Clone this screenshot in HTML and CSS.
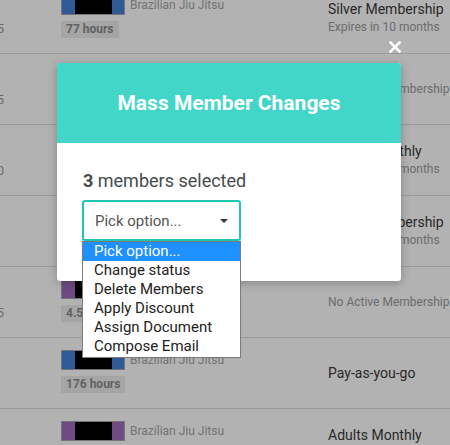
FILE: index.html
```html
<!DOCTYPE html>
<html>
<head>
<meta charset="utf-8">
<link rel="stylesheet" href="styles.css">
</head>
<body>
<div class="list">
  <div class="row">
    <div class="c-num">25</div>
    <div class="c-rank">
      <div class="rank-line"><span class="belt blue"><span class="stripe"></span></span><span class="art">Brazilian Jiu Jitsu</span></div>
      <span class="tag">77 hours</span>
    </div>
    <div class="c-plan"><div class="plan">Silver Membership</div><div class="sub">Expires in 10 months</div></div>
  </div>
  <div class="row">
    <div class="c-num">15</div>
    <div class="c-rank">
      <div class="rank-line"><span class="belt blue"><span class="stripe"></span></span><span class="art">Brazilian Jiu Jitsu</span></div>
      <span class="tag">12 hours</span>
    </div>
    <div class="c-plan"><div class="sub">No Active Membership</div></div>
  </div>
  <div class="row">
    <div class="c-num">20</div>
    <div class="c-rank">
      <div class="rank-line"><span class="belt purple"><span class="stripe"></span></span><span class="art">Brazilian Jiu Jitsu</span></div>
      <span class="tag">30 hours</span>
    </div>
    <div class="c-plan"><div class="plan">Adults Monthly</div><div class="sub">Expires in 10 months</div></div>
  </div>
  <div class="row">
    <div class="c-num"></div>
    <div class="c-rank">
      <div class="rank-line"><span class="belt blue"><span class="stripe"></span></span><span class="art">Brazilian Jiu Jitsu</span></div>
    </div>
    <div class="c-plan"><div class="plan">Silver Membership</div><div class="sub">Expires in 11 months</div></div>
  </div>
  <div class="row">
    <div class="c-num">35</div>
    <div class="c-rank">
      <div class="rank-line"><span class="belt purple"><span class="stripe"></span></span><span class="art">Brazilian Jiu Jitsu</span></div>
      <span class="tag">4.5 hours</span>
    </div>
    <div class="c-plan"><div class="sub">No Active Membership</div></div>
  </div>
  <div class="row">
    <div class="c-num"></div>
    <div class="c-rank">
      <div class="rank-line"><span class="belt blue"><span class="stripe"></span></span><span class="art">Brazilian Jiu Jitsu</span></div>
      <span class="tag">176 hours</span>
    </div>
    <div class="c-plan"><div class="plan">Pay-as-you-go</div></div>
  </div>
  <div class="row">
    <div class="c-num"></div>
    <div class="c-rank">
      <div class="rank-line"><span class="belt purple"><span class="stripe"></span></span><span class="art">Brazilian Jiu Jitsu</span></div>
    </div>
    <div class="c-plan"><div class="plan">Adults Monthly</div><div class="sub">Expires in 9 months</div></div>
  </div>
</div>

<div class="overlay"></div>

<svg class="close" width="12" height="12" viewBox="0 0 12 12"><path d="M1.5 1.5 L10.5 10.5 M10.5 1.5 L1.5 10.5" stroke="#fff" stroke-width="2.6" stroke-linecap="square"/></svg>

<div class="modal">
  <div class="modal-head">Mass Member Changes</div>
  <div class="modal-body">
    <div class="count"><b>3</b> members selected</div>
    <div class="select">
      <span>Pick option...</span>
      <svg class="caret" width="8" height="4" viewBox="0 0 8 4"><path d="M0 0 H8 L4 4 Z" fill="#333"/></svg>
    </div>
  </div>
</div>

<div class="dropdown">
  <div class="opt active">Pick option...</div>
  <div class="opt">Change status</div>
  <div class="opt">Delete Members</div>
  <div class="opt">Apply Discount</div>
  <div class="opt">Assign Document</div>
  <div class="opt">Compose Email</div>
</div>
</body>
</html>
```

FILE: styles.css
```css
html, body {
  margin: 0;
  padding: 0;
  background: #fff;
  font-family: Roboto, "Liberation Sans", sans-serif;
  overflow: hidden;
  width: 450px;
  height: 445px;
}

.list {
  margin-top: -17px;
}

.row {
  display: flex;
  height: 70px;
  border-bottom: 1px solid #dedede;
}

.c-num {
  width: 44px;
  margin-left: -40px;
  text-align: right;
  font-size: 13px;
  color: #9a9a9a;
  padding-top: 38px;
  box-sizing: border-box;
}

.c-rank {
  margin-left: 57px;
  width: 267px;
  flex-shrink: 0;
  padding-top: 12px;
  display: flex;
  flex-direction: column;
  align-items: flex-start;
  gap: 6px;
}

.rank-line {
  display: flex;
  align-items: center;
  gap: 5px;
}

.belt {
  display: flex;
  justify-content: center;
  width: 62px;
  height: 18px;
  border: 1px solid #a8a8a8;
}
.belt.blue { background: #4580d6; }
.belt.purple { background: #9e6cb8; }
.stripe {
  width: 37px;
  height: 100%;
  background: #000;
}

.art {
  font-size: 12px;
  color: #a6a6a6;
}

.tag {
  display: inline-block;
  background: #ececec;
  color: #8c8c8c;
  font-weight: 700;
  font-size: 12px;
  line-height: 17px;
  height: 17px;
  padding: 0 5px;
}

.c-plan {
  display: flex;
  flex-direction: column;
  justify-content: center;
  white-space: nowrap;
}
.plan {
  font-size: 14px;
  color: #3a3a3a;
  line-height: 19px;
}
.sub {
  font-size: 12px;
  color: #9c9c9c;
  line-height: 17px;
}

.overlay {
  position: absolute;
  left: 0;
  top: 0;
  width: 450px;
  height: 445px;
  background: rgba(0, 0, 0, 0.3);
}

.close {
  position: absolute;
  left: 389px;
  top: 41px;
}

.modal {
  position: absolute;
  left: 57px;
  top: 63px;
  width: 344px;
  border-radius: 3px;
  overflow: hidden;
  background: #fff;
  box-shadow: 0 2px 10px rgba(0, 0, 0, 0.25);
}

.modal-head {
  background: #42d6c9;
  height: 80px;
  display: flex;
  align-items: center;
  justify-content: center;
  color: #fff;
  font-size: 21px;
  font-weight: 700;
}

.modal-body {
  height: 138px;
  padding: 27px 0 0 25px;
  box-sizing: border-box;
}

.count {
  font-size: 18px;
  color: #454c4b;
  line-height: 22px;
  padding-left: 1px;
}
.count b {
  font-weight: 700;
}

.select {
  margin-top: 8px;
  width: 159px;
  height: 41px;
  box-sizing: border-box;
  border: 2px solid #1fc6b3;
  border-radius: 3px;
  display: flex;
  align-items: center;
  justify-content: space-between;
  padding: 0 11px 0 11px;
  font-size: 15px;
  color: #555;
}
.caret {
  display: block;
}

.dropdown {
  position: absolute;
  left: 82px;
  top: 241px;
  width: 159px;
  box-sizing: border-box;
  border: 1px solid #7a7a7a;
  background: #fff;
  padding-bottom: 1px;
}
.opt {
  height: 19px;
  line-height: 19px;
  font-size: 15px;
  color: #222;
  padding-left: 11px;
}
.opt.active {
  background: #1e90ff;
  color: #fff;
}
```
